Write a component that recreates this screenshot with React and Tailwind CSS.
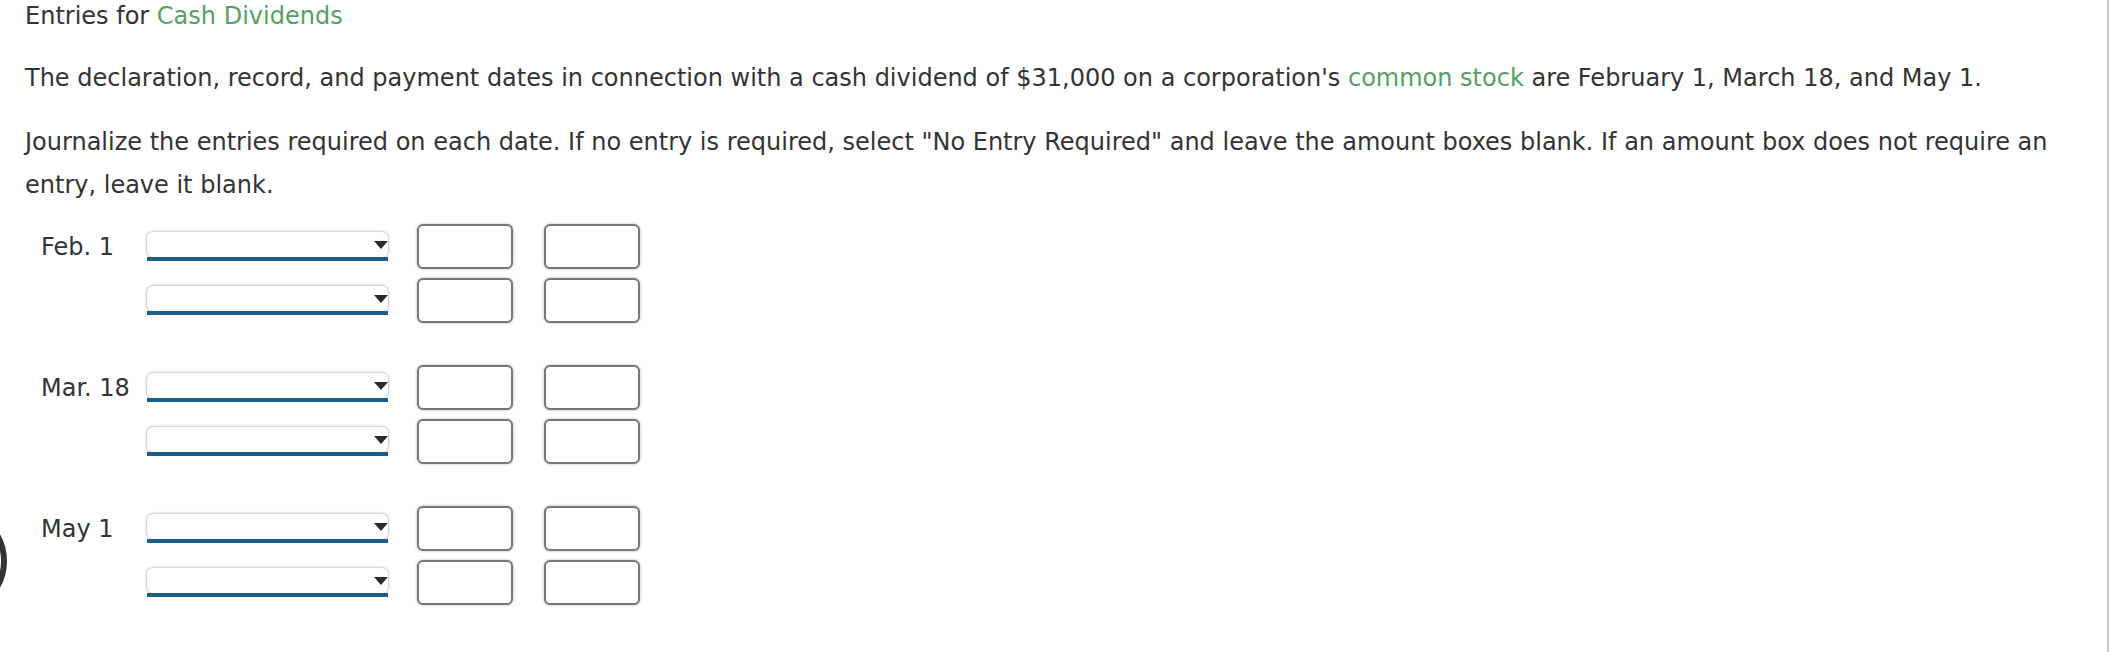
import React from "react";

function Dropdown() {
  return (
    <div className="flex flex-col w-[241px]">
      <div className="h-[25px] bg-white rounded-[6px] shadow-[0_0_3px_rgba(0,0,0,0.45)] flex items-center justify-end">
        <svg width="14" height="8" viewBox="0 0 14 8">
          <polygon points="0,0 14,0 7,8" fill="#2b2b2b" />
        </svg>
      </div>
      <div className="h-[4px] bg-[#1a5f8b]" />
    </div>
  );
}

function Box() {
  return (
    <div className="w-[96px] h-[45px] rounded-[6px] border-2 border-[#787878] bg-white shadow-[0_0_3px_rgba(0,0,0,0.3)]" />
  );
}

function Row({ label }) {
  return (
    <div className="flex items-center h-[45px]">
      <div className="w-[106px] text-[24px] leading-[30px] whitespace-nowrap">{label}</div>
      <Dropdown />
      <div className="ml-[29px]">
        <Box />
      </div>
      <div className="ml-[31px]">
        <Box />
      </div>
    </div>
  );
}

function Section({ label }) {
  return (
    <div className="flex flex-col gap-[9px]">
      <Row label={label} />
      <Row label="" />
    </div>
  );
}

export default function App() {
  return (
    <div className="relative w-[2109px] h-[652px] bg-white overflow-hidden border-r-2 border-[#c8c8c8] box-border text-[#333] font-['Verdana','DejaVu_Sans',sans-serif]">
      <div className="pl-[25px] pr-[30px] text-[24px]">
        <h2 className="leading-[32px]">
          Entries for <span className="text-[#55a062]">Cash Dividends</span>
        </h2>
        <p className="mt-[25px] leading-[43px]">
          The declaration, record, and payment dates in connection with a cash dividend of $31,000 on a corporation's{" "}
          <span className="text-[#55a062]">common stock</span> are February 1, March 18, and May 1.
        </p>
        <p className="mt-[21px] leading-[43px]">
          Journalize the entries required on each date. If no entry is required, select "No Entry Required" and leave the amount boxes blank. If an amount box does not require an entry, leave it blank.
        </p>
      </div>
      <div className="pl-[41px] mt-[17px] flex flex-col gap-[42px]">
        <Section label="Feb. 1" />
        <Section label="Mar. 18" />
        <Section label="May 1" />
      </div>
      <div className="absolute left-[-101px] top-[507px] w-[108px] h-[108px] rounded-full border-[6px] border-[#333]" />
    </div>
  );
}
